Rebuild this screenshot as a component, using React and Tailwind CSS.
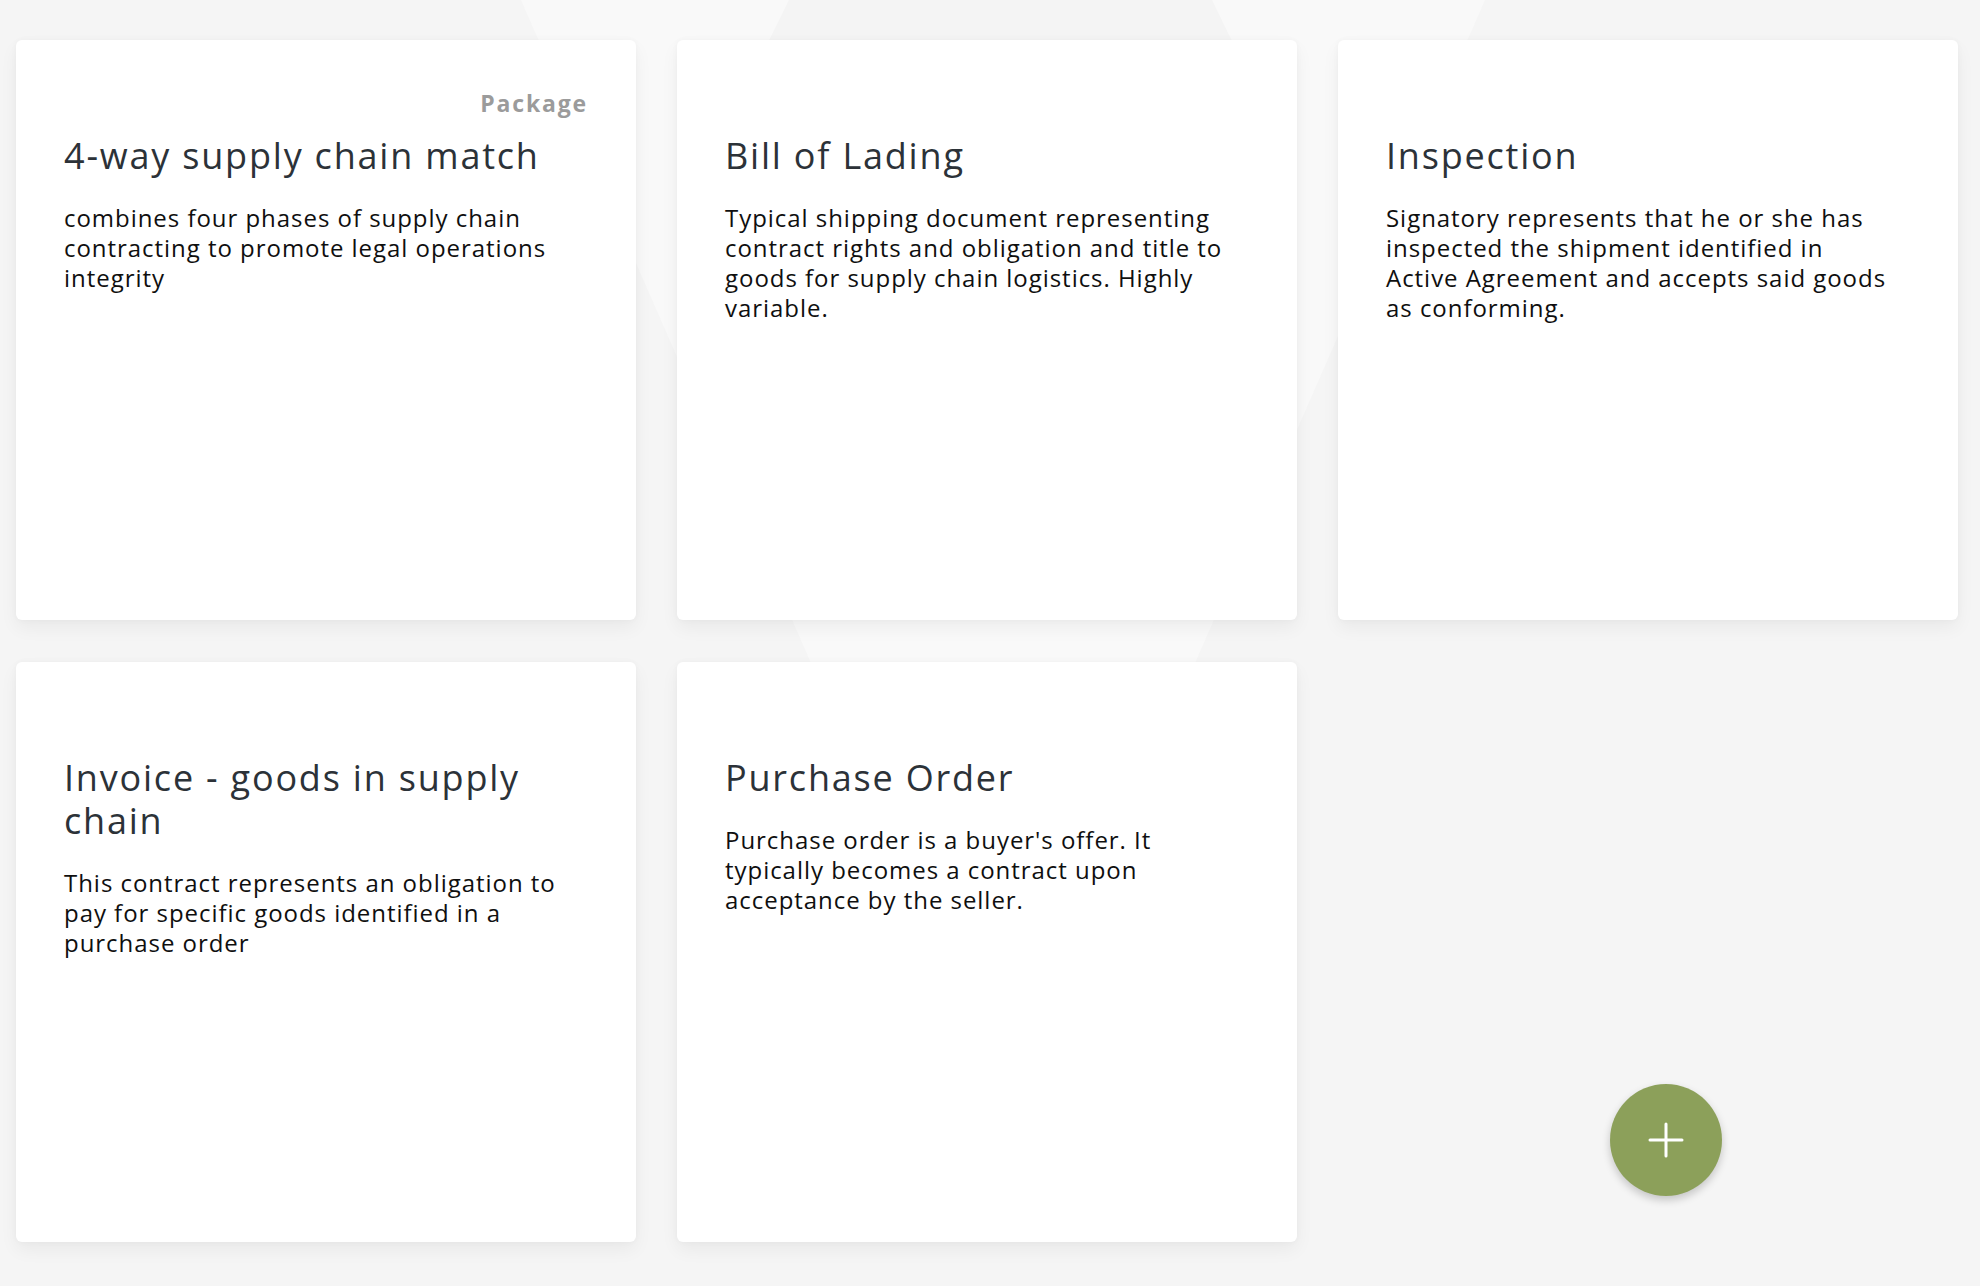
import React from 'react';

const templates = [
    {
        label: 'Package',
        title: ['4-way supply chain match'],
        body: ['combines four phases of supply chain', 'contracting to promote legal operations', 'integrity'],
    },
    {
        label: '',
        title: ['Bill of Lading'],
        body: ['Typical shipping document representing', 'contract rights and obligation and title to', 'goods for supply chain logistics. Highly', 'variable.'],
    },
    {
        label: '',
        title: ['Inspection'],
        body: ['Signatory represents that he or she has', 'inspected the shipment identified in', 'Active Agreement and accepts said goods', 'as conforming.'],
    },
    {
        label: '',
        title: ['Invoice - goods in supply', 'chain'],
        body: ['This contract represents an obligation to', 'pay for specific goods identified in a', 'purchase order'],
    },
    {
        label: '',
        title: ['Purchase Order'],
        body: ["Purchase order is a buyer's offer. It", 'typically becomes a contract upon', 'acceptance by the seller.'],
    },
];

// faint decorative shape behind the cards
const Backdrop = () => (
    <svg className="absolute inset-0 w-full h-full pointer-events-none" viewBox="0 0 1980 1286" preserveAspectRatio="none">
        <polygon points="521,0 1485,0 1003,1102" fill="#f9f9f9" />
        <polygon points="789,0 1212,0 1285,150 1000,460 715,150" fill="#f4f4f4" />
    </svg>
);

const TemplateCard = ({ label, title, body }) => (
    <div className="bg-white rounded-md shadow-[0_8px_18px_rgba(0,0,0,0.05),0_0_6px_rgba(0,0,0,0.03)] h-[580px] px-12 pt-12">
        <div className="h-[30px] text-right text-[23px] leading-[30px] font-bold text-[#9b9b9b] tracking-[0.08em]">
            {label}
        </div>
        <h2 className="mt-4 text-[36px] leading-[1.2] text-[#2c3238] tracking-[0.05em] whitespace-nowrap">
            {title.map((line, i) => (
                <div key={i}>{line}</div>
            ))}
        </h2>
        <p className="mt-[26px] text-[24px] leading-[30px] text-[#0f0f0f] tracking-[0.04em] whitespace-nowrap">
            {body.map((line, i) => (
                <span key={i} className="block">{line}</span>
            ))}
        </p>
    </div>
);

export default function App() {
    return (
        <div className="relative min-h-[1286px] w-full bg-[#f5f5f5] overflow-hidden font-['Open_Sans',sans-serif]">
            <Backdrop />
            <div className="relative grid grid-cols-[repeat(3,620px)] gap-x-[41px] gap-y-[42px] pl-4 pt-10">
                {templates.map((t, i) => (
                    <TemplateCard key={i} {...t} />
                ))}
            </div>
            {/* add button */}
            <button className="fixed right-[258px] bottom-[90px] w-[112px] h-[112px] rounded-full bg-[#8ca05a] shadow-[0_4px_8px_rgba(0,0,0,0.2)] flex items-center justify-center">
                <svg width="36" height="36" viewBox="0 0 36 36" fill="none" stroke="white" strokeWidth="3" strokeLinecap="round">
                    <path d="M2 18h32" />
                    <path d="M18 2v32" />
                </svg>
            </button>
        </div>
    );
}
